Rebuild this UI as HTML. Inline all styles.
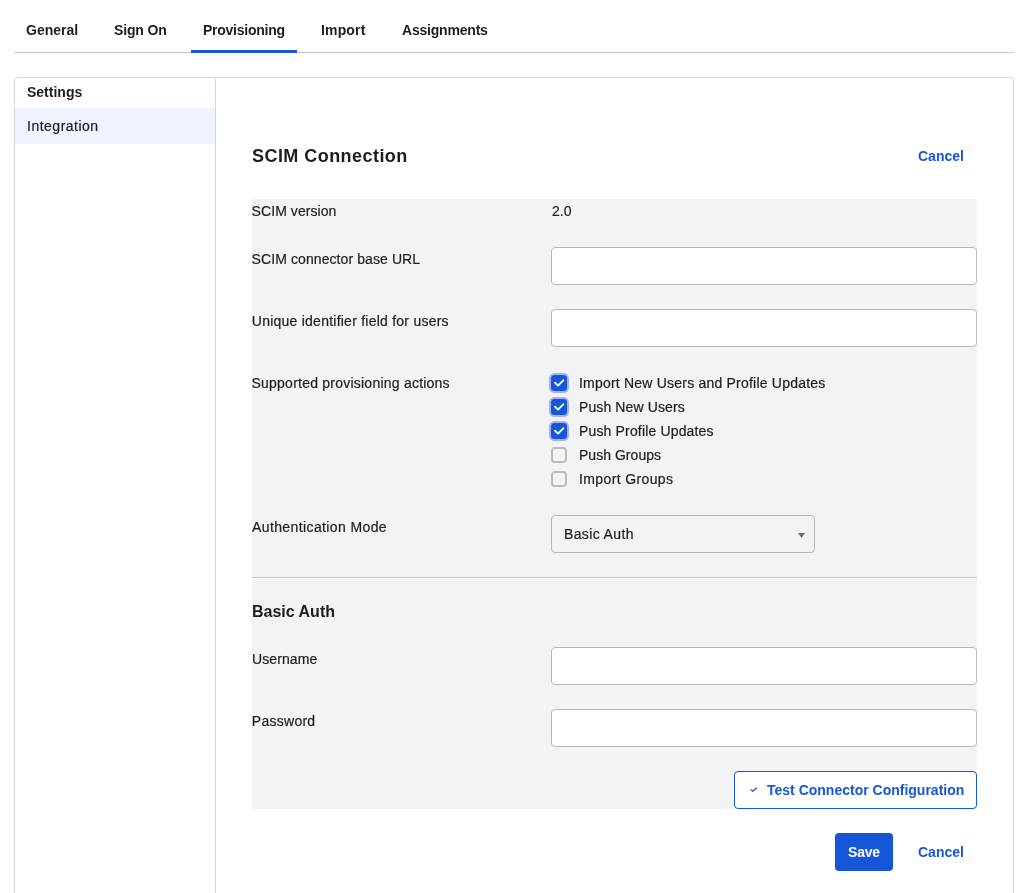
<!DOCTYPE html>
<html>
<head>
<meta charset="utf-8">
<style>
html,body{margin:0;padding:0;background:#fff;}
body{width:1025px;height:893px;position:relative;overflow:hidden;will-change:transform;font-family:"Liberation Sans",sans-serif;color:#1d1d21;font-size:14px;}
.t{position:absolute;white-space:nowrap;line-height:20px;font-size:14px;-webkit-text-stroke:0.2px currentColor;}
.b{font-weight:bold;-webkit-text-stroke:0;}
.blue{color:#1657d8;}
.tabline{position:absolute;left:14px;top:52px;width:1000px;height:1px;background:#c8c8ce;}
.tabul{position:absolute;left:191px;top:50px;width:106px;height:3px;background:#1657d8;}
.card{position:absolute;left:14px;top:77px;width:998px;height:900px;border:1px solid #d6d6db;border-radius:4px;box-sizing:content-box;}
.side{position:absolute;left:215px;top:78px;width:1px;height:900px;background:#d6d6db;}
.hl{position:absolute;left:15px;top:108px;width:200px;height:36px;background:#eff2ff;}
.gray{position:absolute;left:252px;top:199px;width:725px;height:610px;background:#f3f3f5;}
.inp{position:absolute;left:551px;width:424px;height:36px;border:1px solid #b8b8bf;border-radius:4px;background:#fff;}
.sel{position:absolute;left:551px;top:515px;width:262px;height:36px;border:1px solid #b8b8bf;border-radius:4px;background:#f3f3f5;}
.cb{position:absolute;left:551px;width:16px;height:16px;border-radius:3.5px;background:#1657d8;box-shadow:0 0 0 2px #a3b3ef;}
.cbu{position:absolute;left:551px;width:12px;height:12px;border-radius:4px;border:2px solid #babac0;}
.div{position:absolute;left:252px;top:577px;width:725px;height:1px;background:#c8c8ce;}
.btn-o{position:absolute;left:734px;top:771px;width:241px;height:36px;border:1px solid #1657d8;border-radius:4px;background:#fff;}
.btn-s{position:absolute;left:835px;top:833px;width:58px;height:38px;border-radius:4px;background:#1657d8;}
</style>
</head>
<body>
<!-- tabs -->
<div class="tabline"></div>
<div class="tabul"></div>
<div class="t b" style="left:26px;top:20px;">General</div>
<div class="t b" style="left:114px;top:20px;letter-spacing:-0.15px;">Sign On</div>
<div class="t b" style="left:203px;top:20px;letter-spacing:-0.25px;">Provisioning</div>
<div class="t b" style="left:321px;top:20px;letter-spacing:0.15px;">Import</div>
<div class="t b" style="left:402px;top:20px;letter-spacing:-0.2px;">Assignments</div>

<!-- card -->
<div class="card"></div>
<div class="hl"></div>
<div class="side"></div>
<div class="t b" style="left:27px;top:82px;">Settings</div>
<div class="t" style="left:27px;top:116px;letter-spacing:0.5px;">Integration</div>

<div class="t b" style="left:252px;top:144px;font-size:18px;line-height:24px;letter-spacing:0.45px;">SCIM Connection</div>
<div class="t b blue" style="left:918px;top:146px;">Cancel</div>

<div class="gray"></div>
<div class="t" style="left:251.6px;top:201px;letter-spacing:0.07px;">SCIM version</div>
<div class="t" style="left:552px;top:201px;">2.0</div>

<div class="t" style="left:251.6px;top:249px;letter-spacing:0.09px;">SCIM connector base URL</div>
<div class="inp" style="top:247px;"></div>

<div class="t" style="left:251.8px;top:311px;letter-spacing:0.24px;">Unique identifier field for users</div>
<div class="inp" style="top:309px;"></div>

<div class="t" style="left:251.5px;top:373px;letter-spacing:0.23px;">Supported provisioning actions</div>
<div class="cb" style="top:375px;"><svg width="16" height="16" style="position:absolute;left:0;top:0"><path d="M4 7.7 L7 10.7 L12.3 5.3" fill="none" stroke="#fff" stroke-width="1.9" stroke-linecap="round" stroke-linejoin="round"/></svg></div>
<div class="cb" style="top:399px;"><svg width="16" height="16" style="position:absolute;left:0;top:0"><path d="M4 7.7 L7 10.7 L12.3 5.3" fill="none" stroke="#fff" stroke-width="1.9" stroke-linecap="round" stroke-linejoin="round"/></svg></div>
<div class="cb" style="top:423px;"><svg width="16" height="16" style="position:absolute;left:0;top:0"><path d="M4 7.7 L7 10.7 L12.3 5.3" fill="none" stroke="#fff" stroke-width="1.9" stroke-linecap="round" stroke-linejoin="round"/></svg></div>
<div class="cbu" style="top:447px;"></div>
<div class="cbu" style="top:471px;"></div>
<div class="t" style="left:579px;top:373px;letter-spacing:0.21px;">Import New Users and Profile Updates</div>
<div class="t" style="left:579px;top:397px;letter-spacing:0.11px;">Push New Users</div>
<div class="t" style="left:579px;top:421px;letter-spacing:0.16px;">Push Profile Updates</div>
<div class="t" style="left:579px;top:445px;letter-spacing:0.03px;">Push Groups</div>
<div class="t" style="left:579px;top:469px;letter-spacing:0.38px;">Import Groups</div>

<div class="t" style="left:252px;top:517px;letter-spacing:0.39px;">Authentication Mode</div>
<div class="sel"></div>
<div class="t" style="left:564px;top:524px;letter-spacing:0.37px;">Basic Auth</div>
<svg style="position:absolute;left:798px;top:533px" width="8" height="6"><path d="M0 0 L7 0 L3.5 5 Z" fill="#6e6e73"/></svg>

<div class="div"></div>
<div class="t b" style="left:252px;top:602px;font-size:16px;">Basic Auth</div>

<div class="t" style="left:252px;top:649px;letter-spacing:0.1px;">Username</div>
<div class="inp" style="top:647px;"></div>
<div class="t" style="left:251.8px;top:711px;letter-spacing:0.27px;">Password</div>
<div class="inp" style="top:709px;"></div>

<div class="btn-o"></div>
<svg style="position:absolute;left:749px;top:786px" width="10" height="8"><path d="M1.8 3.6 L3.7 5.3 L7.6 2" fill="none" stroke="#1657d8" stroke-width="1.15" stroke-linecap="round" stroke-linejoin="round"/></svg>
<div class="t b blue" style="left:767px;top:780px;">Test Connector Configuration</div>

<div class="btn-s"></div>
<div class="t b" style="left:848px;top:842px;color:#fff;letter-spacing:-0.2px;">Save</div>
<div class="t b blue" style="left:918px;top:842px;">Cancel</div>
</body>
</html>
